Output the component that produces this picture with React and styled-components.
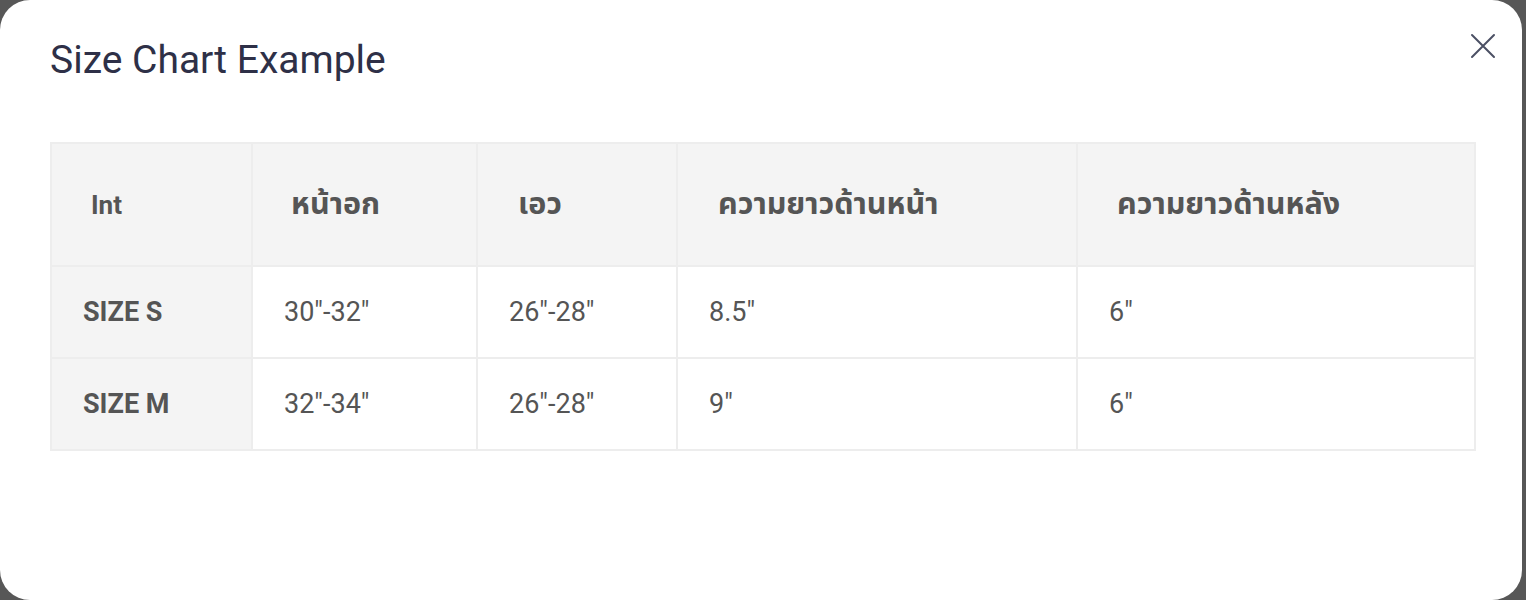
import React from 'react';
import styled, { createGlobalStyle } from 'styled-components';

const GlobalStyle = createGlobalStyle`
	html, body {
		margin: 0;
		padding: 0;
		background: #575757;
	}
	body {
		font-family: Roboto, "Noto Sans Thai", "Noto Sans", "DejaVu Sans", sans-serif;
	}
`;

const Overlay = styled.div`
	width: 1526px;
	height: 600px;
	background: #575757;
	overflow: hidden;
`;

const Modal = styled.div`
	position: relative;
	box-sizing: border-box;
	width: 1522px;
	height: 600px;
	background: #ffffff;
	border-radius: 30px;
	padding: 37px 48px 0 50px;
`;

const Title = styled.h2`
	margin: 0;
	font-size: 39px;
	line-height: 46px;
	font-weight: 400;
	color: #2e3047;
`;

const CloseButton = styled.button`
	position: absolute;
	top: 32px;
	right: 25px;
	width: 28px;
	height: 28px;
	padding: 0;
	border: none;
	background: none;
	cursor: pointer;
	display: flex;
	align-items: center;
	justify-content: center;
`;

const Table = styled.table`
	margin-top: 59px;
	width: 1424px;
	border-collapse: collapse;
	table-layout: fixed;
	color: #555555;
`;

const HeadCell = styled.th`
	height: 121px;
	padding: 0 0 0 ${(p) => p.$pad || 38}px;
	border: 2px solid #ededed;
	background: #f4f4f4;
	font-size: 26px;
	line-height: 30px;
	font-weight: 700;
	text-align: left;
`;

const Thai = styled.span`
	font-size: 30.5px;
`;

const Cell = styled.td`
	height: 90px;
	padding: 0 0 0 31px;
	border: 2px solid #ededed;
	background: ${(p) => (p.$label ? '#f4f4f4' : '#ffffff')};
	font-size: 27px;
	font-weight: ${(p) => (p.$label ? 700 : 400)};
	text-align: left;
`;

const columns = [
	{ title: 'Int', width: 201, pad: 39 },
	{ title: 'หน้าอก', width: 225, pad: 38, thai: true },
	{ title: 'เอว', width: 200, pad: 40, thai: true },
	{ title: 'ความยาวด้านหน้า', width: 400, pad: 40, thai: true },
	{ title: 'ความยาวด้านหลัง', width: 398, pad: 39, thai: true },
];

const rows = [
	['SIZE S', '30"-32"', '26"-28"', '8.5"', '6"'],
	['SIZE M', '32"-34"', '26"-28"', '9"', '6"'],
];

function CloseIcon() {
	return (
		<svg width="26" height="26" viewBox="0 0 26 26" fill="none">
			<path
				d="M2 2L24 24M24 2L2 24"
				stroke="#4b5064"
				strokeWidth="2"
				strokeLinecap="round"
			/>
		</svg>
	);
}

export default function App() {
	return (
		<Overlay>
			<GlobalStyle />
			<Modal>
				<Title>Size Chart Example</Title>
				<CloseButton aria-label="close">
					<CloseIcon />
				</CloseButton>
				<Table>
					<colgroup>
						{columns.map((c) => (
							<col key={c.title} style={{ width: c.width }} />
						))}
					</colgroup>
					<thead>
						<tr>
							{columns.map((c) => (
								<HeadCell key={c.title} $pad={c.pad}>
									{c.thai ? <Thai>{c.title}</Thai> : c.title}
								</HeadCell>
							))}
						</tr>
					</thead>
					<tbody>
						{rows.map((row) => (
							<tr key={row[0]}>
								{row.map((value, i) => (
									<Cell key={i} $label={i === 0}>
										{value}
									</Cell>
								))}
							</tr>
						))}
					</tbody>
				</Table>
			</Modal>
		</Overlay>
	);
}
